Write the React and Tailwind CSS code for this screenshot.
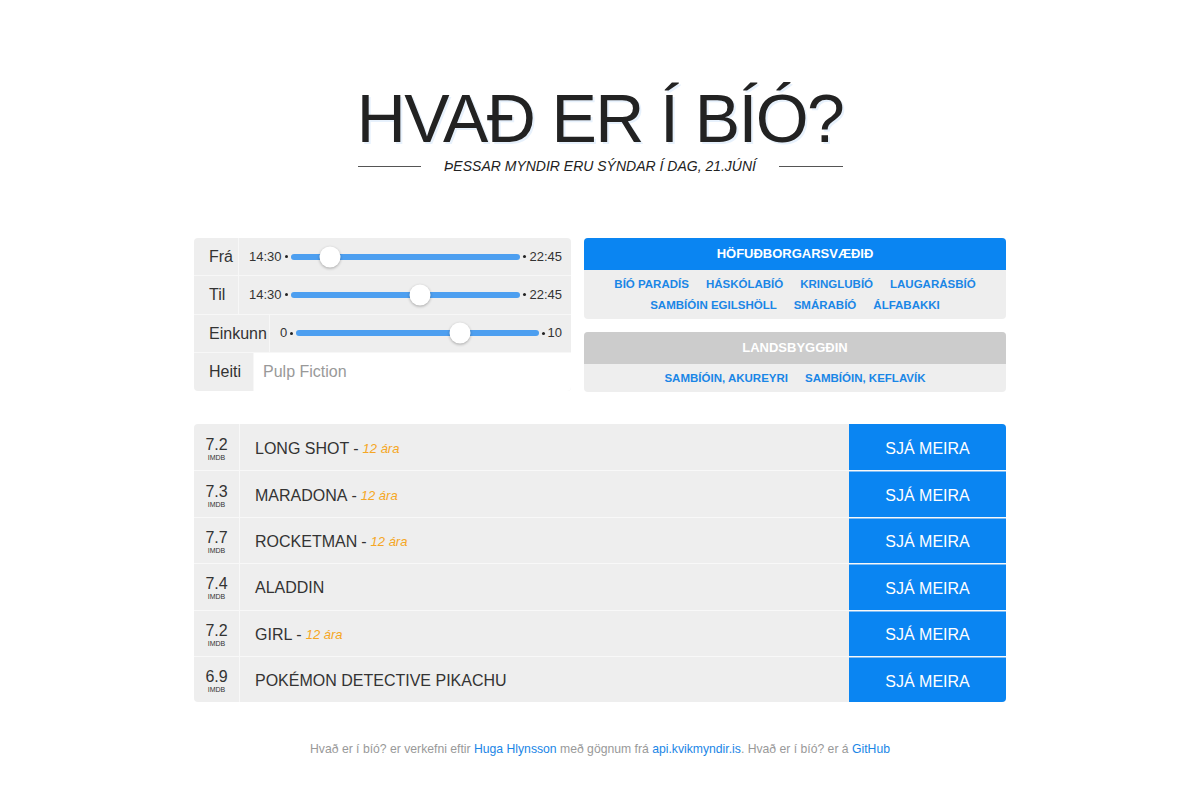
import React from 'react';

const FONT = { fontFamily: '"Liberation Sans", Arial, sans-serif' };

const CAPITAL = ['Bíó Paradís', 'Háskólabíó', 'Kringlubíó', 'Laugarásbíó', 'Sambíóin Egilshöll', 'Smárabíó', 'Álfabakki'];
const COUNTRY = ['Sambíóin, Akureyri', 'Sambíóin, Keflavík'];

const MOVIES = [
  { score: '7.2', title: 'Long Shot', age: '12 ára' },
  { score: '7.3', title: 'Maradona', age: '12 ára' },
  { score: '7.7', title: 'Rocketman', age: '12 ára' },
  { score: '7.4', title: 'Aladdin' },
  { score: '7.2', title: 'Girl', age: '12 ára' },
  { score: '6.9', title: 'Pokémon Detective Pikachu' },
];

function Slider({ min, max, pos }) {
  return (
    <div className="flex flex-1 items-center pl-[10px] pr-[9px] text-[13px] text-[#333]">
      <span>{min}</span>
      <span className="mx-[3px] h-[3px] w-[3px] rounded-full bg-[#222]" />
      <div className="relative h-[6px] flex-1 rounded-full bg-[#4d9ff0]">
        <span
          className="absolute top-1/2 h-[21px] w-[21px] -translate-x-1/2 -translate-y-1/2 rounded-full bg-white shadow-[0_1px_3px_rgba(0,0,0,0.3)]"
          style={{ left: `${pos}%` }}
        />
      </div>
      <span className="mx-[3px] h-[3px] w-[3px] rounded-full bg-[#222]" />
      <span>{max}</span>
    </div>
  );
}

function FilterRow({ label, width, children, last }) {
  return (
    <div className={`flex h-[38.25px] ${last ? '' : 'border-b border-[#f7f7f7]'}`}>
      <div className={`flex shrink-0 items-center border-r border-[#f7f7f7] pl-[15px] pt-px text-[16px] text-[#333] ${width}`}>
        {label}
      </div>
      {children}
    </div>
  );
}

function Region({ name, items, active }) {
  return (
    <div className="overflow-hidden rounded-[4px] bg-[#eeeeee]">
      <div className={`flex h-[32px] items-center justify-center text-[13px] font-bold text-white ${active ? 'bg-[#0a85f2]' : 'bg-[#cccccc]'}`}>
        {name.toUpperCase()}
      </div>
      <div className="flex flex-wrap justify-center gap-x-[17px] px-[20px] py-[3.5px] text-[11.5px] font-bold leading-[21px] text-[#1a86e6]">
        {items.map(i => <span key={i}>{i.toUpperCase()}</span>)}
      </div>
    </div>
  );
}

export default function App() {
  return (
    <div className="min-h-[802px] bg-white" style={FONT}>
      <div className="mx-auto w-[812px] pt-[84px]">
        <h1 className="text-center text-[68px] leading-none tracking-[-1.6px] text-[#222] [text-shadow:2px_2px_0_rgba(60,140,230,0.12)]">
          HVAÐ ER Í BÍÓ?
        </h1>
        <div className="mx-auto mt-[6px] flex w-[485px] items-center">
          <span className="h-px flex-1 bg-[#555]" />
          <span className="mx-[23px] text-[14px] italic leading-4 text-[#222]">ÞESSAR MYNDIR ERU SÝNDAR Í DAG, 21.JÚNÍ</span>
          <span className="h-px flex-1 bg-[#555]" />
        </div>

        {/* Filters and cinemas */}
        <div className="mt-[64px] grid grid-cols-[377px_1fr] items-start gap-[13px]">
          <div className="overflow-hidden rounded-[4px] bg-[#eeeeee]">
            <FilterRow label="Frá" width="w-[45px]">
              <Slider min="14:30" max="22:45" pos={17.2} />
            </FilterRow>
            <FilterRow label="Til" width="w-[45px]">
              <Slider min="14:30" max="22:45" pos={56.5} />
            </FilterRow>
            <FilterRow label="Einkunn" width="w-[76px]">
              <Slider min="0" max="10" pos={67.4} />
            </FilterRow>
            <FilterRow label="Heiti" width="w-[60px]" last>
              <div className="flex flex-1 items-center bg-white pl-[9px] pt-px text-[16px] text-[#999]">Pulp Fiction</div>
            </FilterRow>
          </div>
          <div className="flex flex-col gap-[13px]">
            <Region name="Höfuðborgarsvæðið" items={CAPITAL} active />
            <Region name="Landsbyggðin" items={COUNTRY} />
          </div>
        </div>

        {/* Movies */}
        <div className="mt-[32px] overflow-hidden rounded-[4px]">
          {MOVIES.map((m, i) => (
            <div key={i} className={`flex h-[46.4px] bg-[#eeeeee] ${i > 0 ? 'border-t border-[#f8f8f8]' : ''}`}>
              <div className="flex w-[46px] shrink-0 flex-col items-center justify-center border-r border-[#f8f8f8] pt-[4px] text-[#333]">
                <span className="text-[16px] leading-[16px]">{m.score}</span>
                <span className="text-[7px] leading-[9px]">IMDB</span>
              </div>
              <div className="flex flex-1 items-center pl-[15px] pt-[3px] text-[16px] text-[#333]">
                {m.title.toUpperCase()}
                {m.age && (
                  <>
                    <span className="ml-[4px]">-</span>
                    <span className="ml-[4px] text-[13px] italic text-[#f5a623]">{m.age}</span>
                  </>
                )}
              </div>
              <div className={`flex w-[157px] shrink-0 items-center justify-center bg-[#0a85f2] pt-[3px] text-[16px] text-white ${i > 0 ? 'border-t border-[#7fbcf5]' : ''}`}>
                SJÁ MEIRA
              </div>
            </div>
          ))}
        </div>

        <p className="mt-[38px] text-center text-[12.2px] leading-[18px] text-[#999]">
          Hvað er í bíó? er verkefni eftir <span className="text-[#1a86e6]">Huga Hlynsson</span> með gögnum frá{' '}
          <span className="text-[#1a86e6]">api.kvikmyndir.is</span>. Hvað er í bíó? er á{' '}
          <span className="text-[#1a86e6]">GitHub</span>
        </p>
      </div>
    </div>
  );
}
